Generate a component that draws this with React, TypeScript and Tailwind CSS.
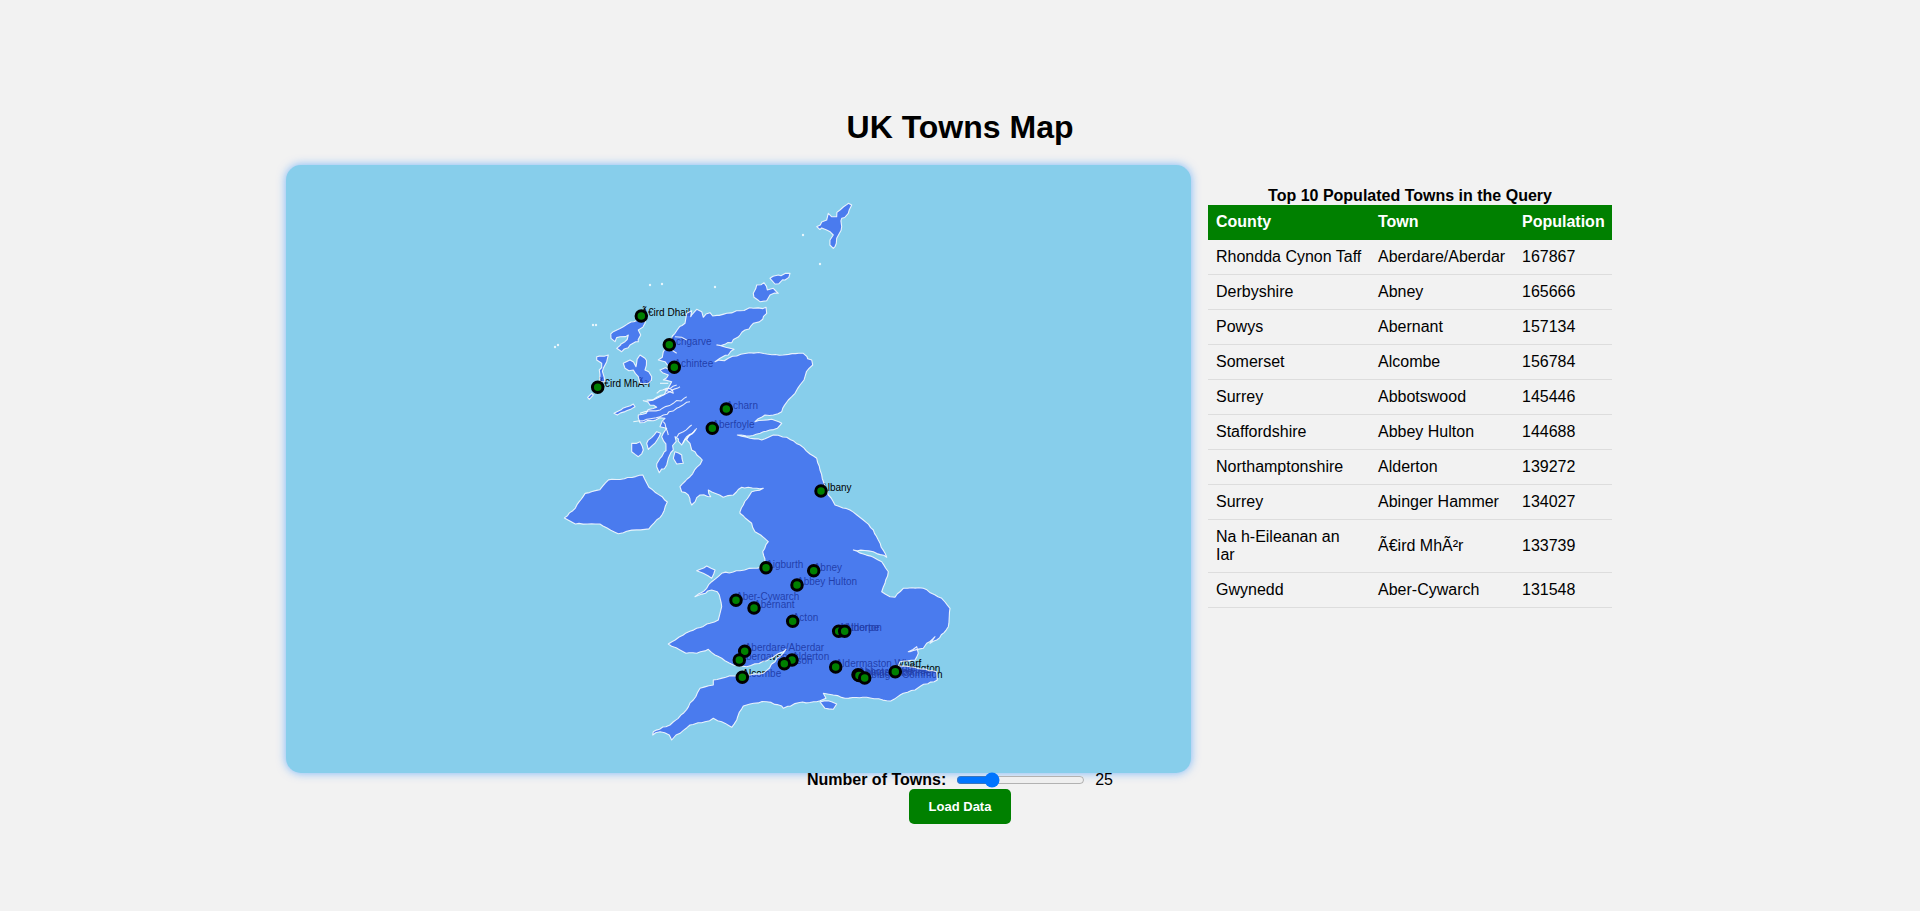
const towns: [string, number, number][] = [
  ["Ã€ird Dhail", 641.3, 316],
  ["Achgarve", 669.3, 344.7],
  ["Achintee", 674.3, 367.3],
  ["Ã€ird MhÃ²r", 597.7, 387.3],
  ["Acharn", 726.3, 409],
  ["Aberfoyle", 712.3, 428.3],
  ["Albany", 821, 491],
  ["Aigburth", 766, 567.7],
  ["Abney", 813.7, 570.7],
  ["Abbey Hulton", 797, 585],
  ["Aber-Cywarch", 736, 600.3],
  ["Abernant", 754, 608],
  ["Acton", 792.7, 621.3],
  ["Abthorpe", 838.7, 631.3],
  ["Alderton", 844.7, 631.3],
  ["Aberdare/Aberdar", 744.7, 651.3],
  ["Abergavenny", 739.3, 660],
  ["Alderton", 792, 660],
  ["Abson", 784.3, 663.7],
  ["Alcombe", 742.3, 677.3],
  ["Aldermaston Wharf", 835.7, 667],
  ["Abbotswood", 858, 674.7],
  ["Abinger Hammer", 859, 675.5],
  ["Abinger Common", 864.7, 678],
  ["Addington", 895.3, 671.7],
];

const rows: [string, string, number][] = [
  ["Rhondda Cynon Taff", "Aberdare/Aberdar", 167867],
  ["Derbyshire", "Abney", 165666],
  ["Powys", "Abernant", 157134],
  ["Somerset", "Alcombe", 156784],
  ["Surrey", "Abbotswood", 145446],
  ["Staffordshire", "Abbey Hulton", 144688],
  ["Northamptonshire", "Alderton", 139272],
  ["Surrey", "Abinger Hammer", 134027],
  ["Na h-Eileanan an Iar", "Ã€ird MhÃ²r", 133739],
  ["Gwynedd", "Aber-Cywarch", 131548],
];

// outlines traced from 3x crops: [origin x, origin y, crinkle amount, points]
type Chunk = [number, number, number, number[]];

let seed = 7;
const rnd = () => {
  seed = (seed * 16807) % 2147483647;
  return seed / 2147483647 - 0.5;
};

// split long edges and shake them a bit so the coast looks like real coast
const trace = (chunks: Chunk[], closed = true) => {
  const out: string[] = [];
  let px = 0;
  let py = 0;
  let first = true;
  for (const [ox, oy, amp, pts] of chunks) {
    for (let i = 0; i < pts.length; i += 2) {
      const x = ox + pts[i] / 3;
      const y = oy + pts[i + 1] / 3;
      if (!first) {
        const steps = Math.floor(Math.hypot(x - px, y - py) / 3.5);
        for (let s = 1; s < steps; s++) {
          const qx = px + ((x - px) * s) / steps + rnd() * amp;
          const qy = py + ((y - py) * s) / steps + rnd() * amp;
          out.push(`${qx.toFixed(1)} ${qy.toFixed(1)}`);
        }
      }
      out.push(`${x.toFixed(1)} ${y.toFixed(1)}`);
      px = x;
      py = y;
      first = false;
    }
  }
  return "M" + out.join("L") + (closed ? "Z" : "");
};

const mainland: Chunk[] = [
  [540, 180, 3, [440,400, 455,392, 452,410, 470,388, 485,395, 490,412, 510,398, 518,408, 560,400, 600,392, 640,385, 678,382, 680,400, 668,418, 640,430, 615,450, 600,465, 575,488, 530,495, 570,505, 582,508, 565,525, 540,535, 525,545, 565,535, 590,528, 630,518, 680,522, 730,525, 790,520, 815,540, 818,555, 795,590, 780,615, 765,640, 745,660, 728,685]],
  [640, 380, 1.2, [425,95, 400,105, 375,105, 345,125, 395,118, 425,130, 412,145, 370,155, 330,168, 292,165, 320,172, 365,180, 400,165, 440,172, 480,195, 510,222, 530,235, 540,270, 552,310, 565,345, 585,375, 630,390, 670,420, 700,450]],
  [640, 480, 1.2, [715,180, 740,232, 700,215, 640,210, 670,222, 700,232, 725,245, 745,275, 735,310, 725,335, 750,350, 765,352, 790,325, 850,325, 905,355, 930,385, 925,440, 890,480, 870,490, 885,470, 860,490, 850,505, 810,515]],
  [800, 630, 1.2, [325,65, 350,50, 355,70, 345,90, 300,95, 295,108, 330,110, 410,125, 412,150, 362,168, 345,180, 310,190, 272,213, 200,202, 135,205, 100,195, 70,190, 78,205, 60,212]],
  [650, 620, 1.5, [500,245, 445,248, 400,265, 395,258, 350,245, 300,252, 280,258, 260,300, 245,322, 215,305, 190,295, 165,305, 120,315, 90,340, 78,345, 65,360, 58,345, 30,335, 8,345, 10,335, 60,315, 100,280, 130,240, 150,205, 190,195, 190,180, 240,167, 300,165, 340,160, 375,125, 408,88, 350,122, 290,140, 250,135, 225,122, 195,105, 175,88, 140,100, 108,100, 90,90, 55,72, 100,45, 140,25, 180,10, 205,0]],
  [640, 480, 1.5, [240,400, 245,380, 232,335, 215,330, 165,350, 200,325, 215,305, 245,280, 300,272, 340,265, 362,262, 375,248, 368,215, 385,185, 362,165, 345,155, 335,130, 300,100]],
  [640, 380, 1.5, [300,395, 310,375, 335,335, 370,325, 305,322, 280,345, 250,352, 225,340, 205,330, 212,350, 180,345, 155,375, 145,345, 125,335, 120,320, 150,290, 170,262, 187,240, 165,215, 155,210]],
  [540, 180, 3.5, [450,790, 440,780, 465,750, 440,770, 425,795, 405,770, 400,810, 385,835, 380,855, 358,878, 350,860, 365,830, 378,800, 365,770, 380,745, 360,740, 375,715, 340,722, 300,728, 295,705, 350,682, 310,662, 360,650, 385,625, 400,640, 375,630, 395,605, 370,600, 385,585, 360,570, 395,565, 375,545, 355,540, 370,515, 395,490, 405,460, 435,430]],
];

const islands: Chunk[][] = [
  // northern ireland, points taken at 3.673x so they line up with the crops
  [[0, 0, 1.2, [461,423, 470,415, 478,403, 490,400, 497,392, 510,391, 525,388, 530,398, 538,404, 545,410, 541,420, 530,432, 516,433, 505,436, 490,428, 470,428].map((v) => v * 3.673)]],
  // anglesey
  [[640, 480, 1.2, [170,272, 200,258, 225,270, 215,295, 190,280]]],
  // isle of wight
  [[800, 630, 1, [60,216, 85,212, 110,222, 100,238, 75,235]]],
  // arran
  [[540, 180, 1, [405,815, 425,825, 430,850, 410,852, 400,835]]],
  // islay, jura
  [[540, 180, 2, [275,790, 300,785, 310,810, 295,830, 275,815]]],
  [[540, 180, 2, [320,790, 350,755, 362,760, 345,790, 325,808]]],
  // coll, tiree
  [[540, 180, 1.5, [222,700, 280,672, 285,680, 232,705]]],
  // skye
  [[550, 280, 3.5, [240,240, 258,260, 270,225, 285,235, 285,270, 305,290, 295,310, 270,310, 265,290, 250,270, 225,265, 220,250]]],
  // lewis, harris
  [[550, 280, 3.5, [290,100, 265,120, 220,140, 190,155, 183,175, 195,185, 210,170, 235,165, 225,185, 200,205, 215,215, 240,195, 265,185, 272,165, 265,150, 285,130]]],
  // uists
  [[550, 280, 3, [140,230, 175,225, 170,245, 160,265, 162,290, 165,305, 150,305, 148,270, 155,250, 140,240]]],
  [[550, 280, 1.5, [125,340, 130,345, 118,358, 113,352]]],
  // orkney
  [[540, 180, 3.5, [640,340, 650,315, 672,308, 682,330, 700,325, 715,340, 690,345, 680,362, 660,365, 642,352]]],
  [[540, 180, 3.5, [690,295, 715,285, 750,280, 735,300, 705,312]]],
  // shetland
  [[540, 180, 3.5, [880,205, 870,180, 880,165, 860,150, 830,140, 860,120, 865,100, 890,110, 900,90, 925,70, 935,75, 925,100, 905,115, 905,140, 890,175, 885,200]]],
];

// sea lochs, white scratches on the land
const lochs: Chunk[] = [
  [540, 180, 2.5, [300,700, 330,692, 360,690, 400,670, 440,650]],
  [540, 180, 2.5, [280,725, 320,718, 370,705, 410,685, 450,665]],
  [540, 180, 2.5, [370,725, 378,745, 385,765]],
  [540, 180, 2.5, [410,772, 430,755, 455,735]],
  [540, 180, 2.5, [430,790, 450,765, 470,745]],
  [540, 180, 2.5, [320,660, 350,652, 380,640, 420,620]],
  [540, 180, 2.5, [350,640, 380,625, 410,615]],
  [540, 180, 2, [405,470, 425,472, 440,480]],
  [540, 180, 2, [410,520, 395,510, 385,500]],
  [540, 180, 2, [360,610, 385,610]],
];

const skerries: [number, number][] = [
  [555, 347], [558, 345], [593, 325], [596, 325], [650, 285], [662, 284], [715, 287], [803, 235], [820, 264],
];

const mainlandPath = trace(mainland);
const islandPaths = islands.map((c) => trace(c));
const lochPaths = lochs.map((c) => trace([c], false));

function UkMap() {
  return (
    <svg viewBox="286 165 905 608" className="w-full h-full block">
      {towns.map(([name, x, y], i) => (
        <text key={i} x={x} y={y} fontSize="10" fontFamily="'Liberation Sans', Arial, sans-serif" fill="#000">
          {name}
        </text>
      ))}
      <g fill="#3059f0" fillOpacity="0.7" stroke="#fff" strokeOpacity="0.85" strokeWidth="1.1" strokeLinejoin="round">
        <path d={mainlandPath} />
        {islandPaths.map((d, i) => (
          <path key={i} d={d} />
        ))}
      </g>
      <g fill="none" stroke="#fff" strokeOpacity="0.85" strokeWidth="1.1">
        {lochPaths.map((d, i) => (
          <path key={i} d={d} />
        ))}
      </g>
      <g fill="#fff" fillOpacity="0.8">
        {skerries.map(([x, y]) => (
          <circle key={x} cx={x} cy={y} r="1.2" />
        ))}
      </g>
      {towns.map(([name, x, y], i) => (
        <circle key={name + i} cx={x} cy={y} r="5.25" fill="#008000" stroke="#000" strokeWidth="3" />
      ))}
    </svg>
  );
}

export default function App() {
  return (
    <div className="min-h-[911px] bg-[#f2f2f2] text-black font-['Liberation_Sans',Arial,sans-serif] text-base flex flex-col items-center pt-[109px]">
      <h1 className="text-[32px] leading-[37px] font-bold m-0">UK Towns Map</h1>
      <div className="w-[1348px] flex items-start mt-[19px]">
        <div className="w-[905px] h-[608px] shrink-0 rounded-[15px] bg-[#87ceeb] shadow-[0_0_10px_rgba(0,123,255,0.5)] overflow-hidden">
          <UkMap />
        </div>
        <table className="table-fixed w-[404px] ml-[17px] mt-[22px] text-left">
          <caption className="font-bold leading-[18px]">Top 10 Populated Towns in the Query</caption>
          <colgroup>
            <col className="w-[162px]" />
            <col className="w-[144px]" />
            <col className="w-[98px]" />
          </colgroup>
          <thead>
            <tr className="bg-[#008000] text-white">
              <th className="pt-2 pb-[9px] px-2 font-bold leading-[18px]">County</th>
              <th className="pt-2 pb-[9px] px-2 font-bold leading-[18px]">Town</th>
              <th className="pt-2 pb-[9px] px-2 font-bold leading-[18px]">Population</th>
            </tr>
          </thead>
          <tbody>
            {rows.map(([county, town, pop]) => (
              <tr key={county + town} className="border-b border-[#ddd]">
                <td className="p-2 leading-[18px]">{county}</td>
                <td className="p-2 leading-[18px]">{town}</td>
                <td className="p-2 leading-[18px]">{pop}</td>
              </tr>
            ))}
          </tbody>
        </table>
      </div>
      <div className="flex items-center -mt-[2px] h-[18px]">
        <label className="font-bold leading-[18px]">Number of Towns:</label>
        <input type="range" min="1" max="100" defaultValue="25" className="mx-[10px]" />
        <span className="leading-[18px]">25</span>
      </div>
      <button className="bg-[#008000] text-white text-[13px] font-bold px-5 py-[10px] leading-[15px] rounded-[5px]">
        Load Data
      </button>
    </div>
  );
}
